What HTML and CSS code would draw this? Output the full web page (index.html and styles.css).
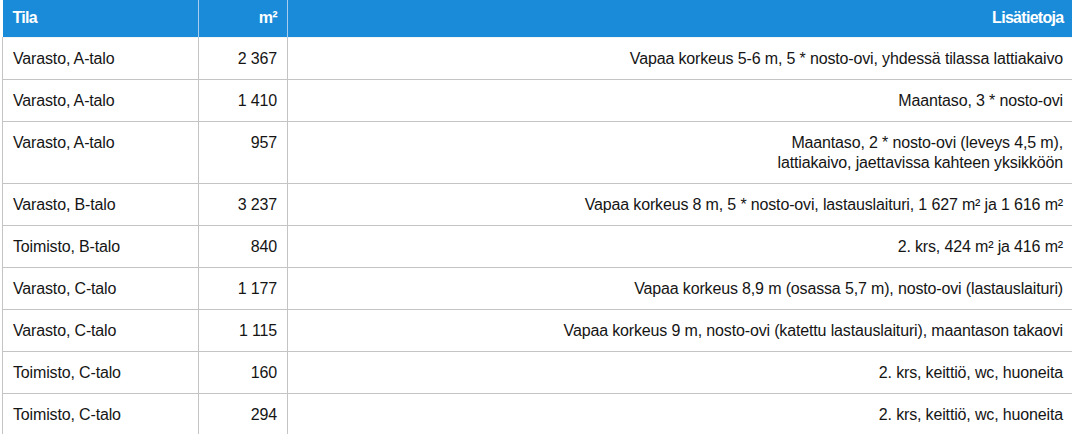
FILE: index.html
```html
<!DOCTYPE html>
<html lang="fi">
<head>
<meta charset="utf-8">
<title>Tilat</title>
<link rel="stylesheet" href="styles.css">
</head>
<body>
<table class="spaces">
  <colgroup>
    <col class="c-tila">
    <col class="c-area">
    <col class="c-info">
  </colgroup>
  <thead>
    <tr>
      <th class="left">Tila</th>
      <th class="right">m²</th>
      <th class="right">Lisätietoja</th>
    </tr>
  </thead>
  <tbody>
    <tr><td>Varasto, A-talo</td><td class="right">2 367</td><td class="right">Vapaa korkeus 5-6 m, 5 * nosto-ovi, yhdessä tilassa lattiakaivo</td></tr>
    <tr><td>Varasto, A-talo</td><td class="right">1 410</td><td class="right">Maantaso, 3 * nosto-ovi</td></tr>
    <tr><td>Varasto, A-talo</td><td class="right">957</td><td class="right">Maantaso, 2 * nosto-ovi (leveys 4,5 m),<br>lattiakaivo, jaettavissa kahteen yksikköön</td></tr>
    <tr><td>Varasto, B-talo</td><td class="right">3 237</td><td class="right">Vapaa korkeus 8 m, 5 * nosto-ovi, lastauslaituri, 1 627 m² ja 1 616 m²</td></tr>
    <tr><td>Toimisto, B-talo</td><td class="right">840</td><td class="right">2. krs, 424 m² ja 416 m²</td></tr>
    <tr><td>Varasto, C-talo</td><td class="right">1 177</td><td class="right">Vapaa korkeus 8,9 m (osassa 5,7 m), nosto-ovi (lastauslaituri)</td></tr>
    <tr><td>Varasto, C-talo</td><td class="right">1 115</td><td class="right">Vapaa korkeus 9 m, nosto-ovi (katettu lastauslaituri), maantason takaovi</td></tr>
    <tr><td>Toimisto, C-talo</td><td class="right">160</td><td class="right">2. krs, keittiö, wc, huoneita</td></tr>
    <tr><td>Toimisto, C-talo</td><td class="right">294</td><td class="right">2. krs, keittiö, wc, huoneita</td></tr>
  </tbody>
</table>
</body>
</html>
```

FILE: styles.css
```css
html, body {
  margin: 0;
  padding: 0;
  background: #ffffff;
  overflow: hidden;
}

body {
  font-family: "Liberation Sans", Arial, sans-serif;
  color: #151515;
}

.spaces {
  border-collapse: collapse;
  table-layout: fixed;
  width: 1072px;
  margin-left: 2px;
  font-size: 16px;
  line-height: 20px;
  letter-spacing: -0.15px;
}

.c-tila { width: 196px; }
.c-area { width: 89px; }

.spaces th {
  background: #1a8bd8;
  color: #ffffff;
  font-weight: bold;
  height: 37px;
  padding: 0 10px;
  box-sizing: border-box;
  border-left: 1px solid #a9cdee;
  letter-spacing: -0.7px;
  vertical-align: middle;
}

.spaces th:first-child { border-left: none; }

.spaces td {
  border: 1px solid #c4c4c4;
  padding: 11px 10px 10px 10px;
  vertical-align: top;
}

.spaces tbody tr:first-child td { border-top: 1px solid #f2f4f6; }

.left { text-align: left; }
.right { text-align: right; }
```
